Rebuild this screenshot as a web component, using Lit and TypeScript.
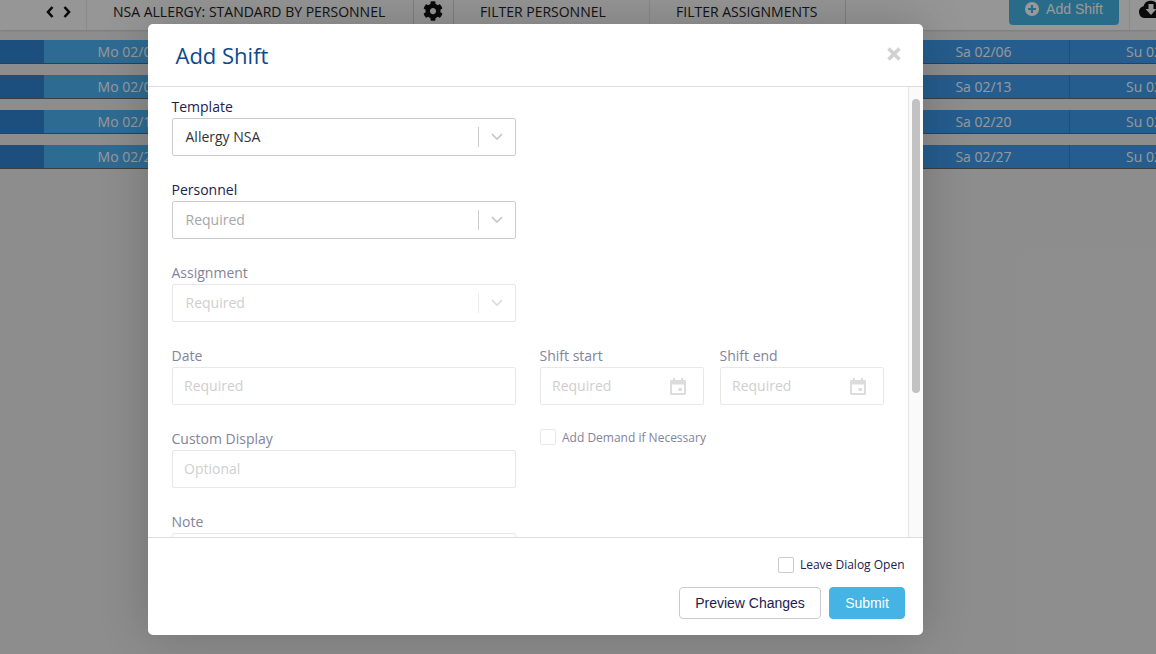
import { LitElement, html, css, svg } from "lit";
import { customElement } from "lit/decorators.js";

const COG = "M487.4 315.7l-42.6-24.6c4.3-23.2 4.3-47 0-70.2l42.6-24.6c4.9-2.8 7.1-8.6 5.5-14-11.1-35.6-30-67.8-54.7-94.6-3.8-4.1-10-5.1-14.8-2.3L380.8 110c-17.9-15.4-38.5-27.3-60.8-35.1V25.8c0-5.6-3.9-10.5-9.4-11.7-36.7-8.2-74.3-7.8-109.2 0-5.5 1.2-9.4 6.1-9.4 11.7V75c-22.2 7.9-42.8 19.8-60.8 35.1L88.7 85.5c-4.9-2.8-11-1.9-14.8 2.3-24.7 26.7-43.6 58.9-54.7 94.6-1.7 5.4.6 11.2 5.5 14L67.3 221c-4.3 23.2-4.3 47 0 70.2l-42.6 24.6c-4.9 2.8-7.1 8.6-5.5 14 11.1 35.6 30 67.8 54.7 94.6 3.8 4.1 10 5.1 14.8 2.3l42.6-24.6c17.9 15.4 38.5 27.3 60.8 35.1v49.2c0 5.6 3.9 10.5 9.4 11.7 36.7 8.2 74.3 7.8 109.2 0 5.5-1.2 9.4-6.1 9.4-11.7v-49.2c22.2-7.9 42.8-19.8 60.8-35.1l42.6 24.6c4.9 2.8 11 1.9 14.8-2.3 24.7-26.7 43.6-58.9 54.7-94.6 1.5-5.5-.7-11.3-5.6-14.1zM256 336c-44.1 0-80-35.9-80-80s35.9-80 80-80 80 35.9 80 80-35.9 80-80 80z";

const chevron = html`<svg class="chev" width="12" height="8" viewBox="0 0 12 8"><path d="M1 1.2 L6 6 L11 1.2" fill="none" stroke="currentColor" stroke-width="1.7"/></svg>`;
const calendar = html`<svg class="cal" width="16" height="17" viewBox="0 0 16 17"><path fill-rule="evenodd" fill="currentColor" d="M3 0h2v2h6V0h2v2h1.5A1.5 1.5 0 0 1 16 3.500V15.500A1.500 1.500 0 0 1 14.500 17H1.500A1.500 1.500 0 0 1 0 15.500V3.500A1.500 1.500 0 0 1 1.500 2H3zM2 6.500V15h12V6.500zM8.500 10h3.500v3h-3.500z"/></svg>`;

const weeks: [string, string, string][] = [
  ["02/01", "02/06", "02/07"],
  ["02/08", "02/13", "02/14"],
  ["02/15", "02/20", "02/21"],
  ["02/22", "02/27", "02/28"],
];

@customElement("app-root")
export class AppRoot extends LitElement {
  static styles = css`
    :host { display: block; position: relative; width: 100%; height: 654px; overflow: hidden; background: #ececec; font-family: "Open Sans", sans-serif; }
    * { box-sizing: border-box; }
    .toolbar { display: flex; height: 30px; background: #fafafa; color: #222; font-size: 14px; line-height: 24px; box-shadow: 0 1px 2px rgba(0,0,0,.12); }
    .cell { height: 30px; border-right: 1px solid #e4e4e4; white-space: nowrap; flex: none; }
    .dark-sep { border-right-color: #d4d4d4; }
    .nav { width: 87px; display: flex; gap: 9px; padding: 6px 0 0 46px; }
    .title { width: 327px; padding-left: 26px; border-right-color: #d4d4d4; }
    .gear { width: 40px; display: flex; justify-content: center; padding: 1px 2px 0 0; }
    .filter { width: 196px; padding-left: 26px; }
    .spacer { flex: 1; }
    .add { flex: none; width: 110px; height: 25px; margin-right: 10px; border-radius: 0 0 4px 4px; background: #45b4e4; color: #fff; font: 14px/18px "Liberation Sans", sans-serif; display: flex; align-items: center; justify-content: center; gap: 7px; padding-bottom: 7px; }
    .dl { flex: none; width: 27px; height: 30px; border-left: 1px solid #e4e4e4; padding: 0 0 0 9px; overflow: hidden; }
    .rows { display: flex; flex-direction: column; gap: 11px; margin-top: 10px; }
    .row { display: flex; height: 24px; border-bottom: 1px solid #666; background: #3e9bed; color: #fff; font-size: 14px; line-height: 23px; overflow: hidden; }
    .stub { flex: none; width: 44px; background: #3084d2; }
    .day { flex: none; width: 171px; padding-right: 1px; text-align: center; border-right: 1px solid #3084d2; white-space: nowrap; }
    .mon { background: #4db2f5; }
    .overlay { position: absolute; inset: 0; background: rgba(0,0,0,.4); }
    .modal { position: absolute; left: 148px; top: 24px; width: 775px; height: 611px; background: #fff; border-radius: 5px; box-shadow: 0 0 50px rgba(0,0,0,.2); display: flex; flex-direction: column; overflow: hidden; }
    .head { flex: none; height: 63px; border-bottom: 1px solid #ddd; display: flex; align-items: center; justify-content: space-between; padding: 0 21px 0 27.5px; }
    h1 { margin: 0; font-size: 22px; font-weight: 400; line-height: 30px; color: #0b4a8f; }
    .close { width: 16px; height: 16px; color: #d2d2d2; margin-bottom: 2px; }
    .main { flex: 1; min-height: 0; display: flex; }
    .content { flex: 1; min-width: 0; overflow: hidden; padding: 9px 24px 0; display: flex; flex-direction: column; gap: 23px; }
    .frow { display: flex; gap: 24px; flex: none; }
    .field { width: 344px; flex: none; }
    .sub { width: 164px; flex: none; }
    .pair { display: flex; gap: 16px; }
    label { display: block; font-size: 14px; line-height: 22px; height: 22px; color: #1b2150; white-space: nowrap; margin-left: -0.5px; }
    .off label { color: #83839b; }
    .box { height: 38px; border: 1px solid #ccc; border-radius: 2px; display: flex; align-items: center; padding: 0 13.5px 2px 12.5px; font-size: 14px; color: #333; background: #fff; }
    .ph { color: #a6a6a6; flex: 1; }
    .off .box { border-color: #e8e8e8; }
    .off .ph { color: #cfcfcf; }
    .date .box { padding: 0 11px 2px; }
    .val { flex: 1; }
    .sep { width: 1px; height: 20px; background: #ccc; margin: 2px 12px 0 0; }
    .off .sep { background: #ececec; }
    .chev { color: #c8c8c8; margin: 2px -1px 0 0; }
    .off .chev { color: #dcdcdc; }
    .cal { color: #dcdcdc; margin: 2px 6px 0 0; }
    .check { display: flex; align-items: center; gap: 5.5px; font-size: 12px; white-space: nowrap; color: #1b2150; }
    .check .txt { margin-right: 0.5px; }
    .cb { width: 16px; height: 16px; border: 1px solid #ccc; border-radius: 2px; background: #fff; flex: none; }
    .add-demand { padding-top: 1px; height: 17px; align-self: flex-start; color: #83839b; gap: 6px; }
    .add-demand .cb { border-color: #e8e8e8; }
    .track { flex: none; width: 15px; background: #fafafa; border-left: 1px solid #e6e6e6; padding: 12px 3px 0 3px; }
    .thumb { width: 8px; height: 294px; background: #c2c2c2; border-radius: 4px; }
    .foot { flex: none; height: 98px; border-top: 1px solid #ddd; padding: 18px 18px 0 0; display: flex; flex-direction: column; align-items: flex-end; gap: 14px; }
    .btns { display: flex; gap: 8px; }
    button { height: 32px; border-radius: 4px; font: 14px "Liberation Sans", sans-serif; padding: 0; }
    .preview { width: 142px; background: #fff; border: 1px solid #ccc; color: #1b2150; }
    .submit { width: 76px; background: #45b4e4; border: 1px solid #45b4e4; color: #fff; }
  `;

  private select(name: string, value: string, placeholder: boolean, off = false) {
    return html`<div class="field ${off ? "off" : ""}">
      <label>${name}</label>
      <div class="box"><span class="${placeholder ? "ph" : "val"}">${value}</span><span class="sep"></span>${chevron}</div>
    </div>`;
  }

  render() {
    return html`
      <div class="toolbar">
        <div class="cell nav">
          <svg width="8" height="12" viewBox="0 0 8 12"><path d="M6.500 1 L2 6 L6.500 11" fill="none" stroke="#111" stroke-width="2.600"/></svg>
          <svg width="8" height="12" viewBox="0 0 8 12"><path d="M1.500 1 L6 6 L1.500 11" fill="none" stroke="#111" stroke-width="2.600"/></svg>
        </div>
        <div class="cell title">NSA ALLERGY: STANDARD BY PERSONNEL</div>
        <div class="cell gear dark-sep">
          <svg width="20" height="20" viewBox="0 0 512 512"><path fill="#111" d="${COG}"/></svg>
        </div>
        <div class="cell filter">FILTER PERSONNEL</div>
        <div class="cell filter dark-sep">FILTER ASSIGNMENTS</div>
        <div class="spacer"></div>
        <div class="add">
          <svg width="14" height="14" viewBox="0 0 14 14"><circle cx="7" cy="7" r="7" fill="#fff"/><path d="M7 3v8M3 7h8" stroke="#45b4e4" stroke-width="2.200"/></svg>
          <span>Add Shift</span>
        </div>
        <div class="dl">
          <svg width="24" height="18" viewBox="0 0 24 18"><path fill="#111" d="M6 18A6 6 0 0 1 4.500 6.200 7.500 7.500 0 0 1 18.500 5 6.500 6.500 0 0 1 18 18z"/><path fill="#fafafa" d="M9.500 4h5v5h3L12 15 6.500 9h3z"/></svg>
        </div>
      </div>
      <div class="rows">
        ${weeks.map(([m, s, u]) => html`<div class="row">
          <div class="stub"></div>
          <div class="day mon">Mo ${m}</div>
          <div class="day"></div><div class="day"></div><div class="day"></div><div class="day"></div>
          <div class="day">Sa ${s}</div>
          <div class="day">Su ${u}</div>
        </div>`)}
      </div>
      <div class="overlay"></div>
      <div class="modal">
        <div class="head">
          <h1>Add Shift</h1>
          <svg class="close" viewBox="0 0 16 16">${svg`<path d="M2.500 2.500 L13.500 13.500 M13.500 2.500 L2.500 13.500" stroke="currentColor" stroke-width="3.600"/>`}</svg>
        </div>
        <div class="main">
          <div class="content">
            <div class="frow">${this.select("Template", "Allergy NSA", false)}</div>
            <div class="frow">${this.select("Personnel", "Required", true)}</div>
            <div class="frow">${this.select("Assignment", "Required", true, true)}</div>
            <div class="frow off">
              <div class="field date"><label>Date</label><div class="box"><span class="ph">Required</span></div></div>
              <div class="pair">
                <div class="sub date"><label>Shift start</label><div class="box"><span class="ph">Required</span>${calendar}</div></div>
                <div class="sub date"><label>Shift end</label><div class="box"><span class="ph">Required</span>${calendar}</div></div>
              </div>
            </div>
            <div class="frow off">
              <div class="field date"><label>Custom Display</label><div class="box"><span class="ph">Optional</span></div></div>
              <div class="check add-demand"><span class="cb"></span><span class="txt">Add Demand if Necessary</span></div>
            </div>
            <div class="frow off">
              <div class="field date"><label>Note</label><div class="box"></div></div>
            </div>
          </div>
          <div class="track"><div class="thumb"></div></div>
        </div>
        <div class="foot">
          <div class="check"><span class="cb"></span><span class="txt">Leave Dialog Open</span></div>
          <div class="btns">
            <button class="preview">Preview Changes</button>
            <button class="submit">Submit</button>
          </div>
        </div>
      </div>
    `;
  }
}
